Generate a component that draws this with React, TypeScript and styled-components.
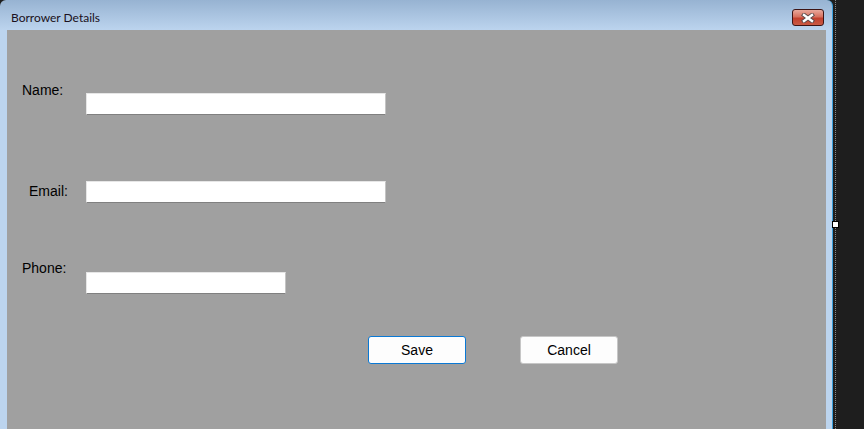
import React from "react";
import styled, { createGlobalStyle } from "styled-components";

const GlobalStyle = createGlobalStyle`
  html, body {
    margin: 0;
    padding: 0;
    background: #1e1e1e;
    overflow: hidden;
  }
  * { box-sizing: border-box; }
`;

const Page = styled.div`
  display: flex;
  flex-direction: row;
  height: 429px;
  overflow: hidden;
  background: #1e1e1e;
`;

const Window = styled.div`
  width: 833px;
  flex: none;
  display: flex;
  flex-direction: column;
  border-radius: 6px 6px 0 0;
  background: linear-gradient(to bottom, #97b3d2 0px, #bcd4ee 30px, #bcd4ee 100%);
  border-right: 1px solid #3a9fdc;
  padding: 0 6px 0 7px;
`;

const TitleBar = styled.div`
  height: 30px;
  flex: none;
  display: flex;
  align-items: flex-start;
`;

const Title = styled.div`
  padding: 11px 0 0 4px;
  font-family: Lato, "Noto Sans", sans-serif;
  font-size: 12px;
  line-height: 14px;
  color: #1a1020;
`;

const CloseButton = styled.div`
  margin: 9px 2px 0 auto;
  width: 32px;
  height: 17px;
  border: 1px solid #3d1414;
  border-radius: 3px;
  background: linear-gradient(to bottom, #e9a99c 0%, #d7715f 45%, #c2402e 55%, #c95a44 100%);
  display: flex;
  align-items: center;
  justify-content: center;
`;

const Client = styled.div`
  flex: 1;
  background: #a0a0a0;
  padding: 52px 0 0 15px;
  display: flex;
  flex-direction: column;
`;

const Row = styled.div<{ $gap: number }>`
  display: flex;
  align-items: flex-start;
  margin-top: ${(p) => p.$gap}px;
`;

const Label = styled.div<{ $indent: number; $offset: number }>`
  width: 64px;
  flex: none;
  padding-left: ${(p) => p.$indent}px;
  margin-top: ${(p) => p.$offset}px;
  font-family: "Liberation Sans", Arial, sans-serif;
  font-size: 14px;
  line-height: 16px;
  color: #000;
`;

const TextBox = styled.input<{ $width: number; $offset: number }>`
  width: ${(p) => p.$width}px;
  height: 22px;
  margin: ${(p) => p.$offset}px 0 0 0;
  padding: 0 3px;
  background: #fff;
  border: 1px solid;
  border-color: #e6e6e6 #c4c4c4 #808080 #e6e6e6;
  font-family: "Liberation Sans", Arial, sans-serif;
  font-size: 14px;
  outline: none;
`;

const ButtonRow = styled.div`
  display: flex;
  gap: 54px;
  margin: 42px 0 0 346px;
`;

const Button = styled.button<{ $primary?: boolean }>`
  width: 98px;
  height: 28px;
  padding: 0;
  background: #fdfdfd;
  border: 1px solid ${(p) => (p.$primary ? "#0a78d4" : "#c6c6c6")};
  border-radius: 3px;
  font-family: "Liberation Sans", Arial, sans-serif;
  font-size: 14px;
  color: #000;
`;

const Designer = styled.div`
  flex: 1;
  position: relative;
  background: #1e1e1e;
`;

const DottedLine = styled.div`
  margin-left: 2px;
  width: 0;
  height: 100%;
  border-left: 1px dotted #8a8a8a;
`;

const Handle = styled.div`
  position: absolute;
  left: -1px;
  top: 221px;
  width: 7px;
  height: 7px;
  background: #fff;
  border: 1px solid #000;
`;

const CloseGlyph = () => (
  <svg width="14" height="10" viewBox="0 0 14 10">
    <path d="M3 2 L11 8 M11 2 L3 8" stroke="#5a4a4a" strokeWidth="4.2" strokeLinecap="square" />
    <path d="M3 2 L11 8 M11 2 L3 8" stroke="#ffffff" strokeWidth="2.4" strokeLinecap="square" />
  </svg>
);

export default function App() {
  return (
    <>
      <GlobalStyle />
      <Page>
        <Window>
          <TitleBar>
            <Title>Borrower Details</Title>
            <CloseButton>
              <CloseGlyph />
            </CloseButton>
          </TitleBar>
          <Client>
            <Row $gap={0}>
              <Label $indent={0} $offset={0}>Name:</Label>
              <TextBox $width={300} $offset={11} />
            </Row>
            <Row $gap={66}>
              <Label $indent={7} $offset={2}>Email:</Label>
              <TextBox $width={300} $offset={0} />
            </Row>
            <Row $gap={57}>
              <Label $indent={0} $offset={0}>Phone:</Label>
              <TextBox $width={200} $offset={12} />
            </Row>
            <ButtonRow>
              <Button $primary>Save</Button>
              <Button>Cancel</Button>
            </ButtonRow>
          </Client>
        </Window>
        <Designer>
          <DottedLine />
          <Handle />
        </Designer>
      </Page>
    </>
  );
}
